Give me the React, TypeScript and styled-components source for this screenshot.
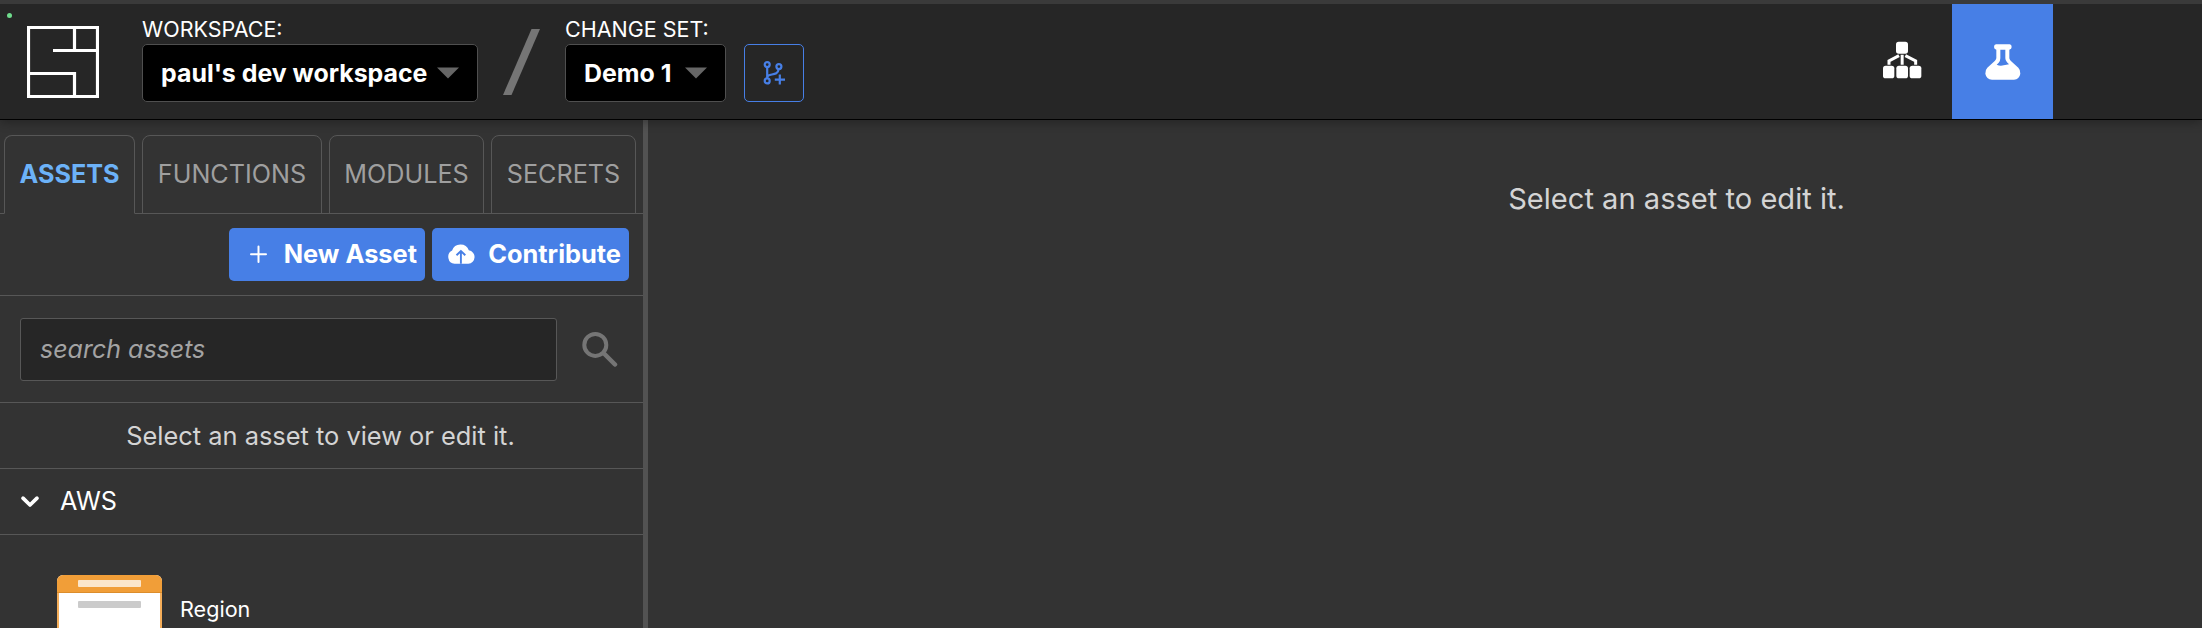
import React from "react";
import styled, { createGlobalStyle } from "styled-components";

const line = "#575757";
const blue = "#477fe6";

const GlobalStyle = createGlobalStyle`
  *, *::before, *::after { box-sizing: border-box; }
  body { margin: 0; overflow: hidden; background: #333; color: #fff; font-family: Inter, sans-serif; }
`;

const Page = styled.div`
  display: flex;
  flex-direction: column;
  height: 628px;
  width: 2202px;
  overflow: hidden;
`;

const Header = styled.header`
  display: flex;
  position: relative;
  flex: none;
  height: 120px;
  background: #262626;
  border-top: 4px solid #3a3a3a;
  border-bottom: 1px solid #000;
  box-shadow: 0 2px 10px rgba(0, 0, 0, 0.32);
`;

const StatusDot = styled.i`
  position: absolute;
  left: 7px;
  top: 9px;
  width: 5px;
  height: 5px;
  border-radius: 50%;
  background: #6fdc8c;
`;

const Logo = styled.svg`
  flex: none;
  width: 72px;
  height: 72px;
  margin: 22px 43px 0 27px;
`;

const Field = styled.div`
  display: flex;
  flex-direction: column;
  align-items: flex-start;
  padding-top: 12px;
`;

const Label = styled.div`
  height: 28px;
  font-size: 21.5px;
  line-height: 26px;
  white-space: nowrap;
`;

const Select = styled.button<{ $width: number }>`
  display: flex;
  align-items: center;
  justify-content: space-between;
  width: ${(p) => p.$width}px;
  height: 58px;
  padding: 0 18px 1px;
  border: 1px solid #4f4f4f;
  border-radius: 5px;
  background: #000;
  color: #fff;
  font: 700 24.9px/30px Inter, sans-serif;
  white-space: nowrap;
`;

const Caret = styled.svg`
  width: 22px;
  height: 12px;
  fill: #666;
`;

const Slash = styled.svg`
  width: 37px;
  height: 66px;
  margin: 25px 25px 0 25px;
  fill: #757575;
`;

const BranchButton = styled.button`
  display: flex;
  align-items: center;
  justify-content: center;
  width: 60px;
  height: 58px;
  margin: 40px 0 0 18px;
  padding: 0;
  border: 1px solid ${blue};
  border-radius: 5px;
  background: transparent;
`;

const Nav = styled.nav`
  display: flex;
  margin-left: auto;
  margin-right: 149px;
`;

const NavItem = styled.a<{ $active?: boolean }>`
  display: flex;
  align-items: center;
  justify-content: center;
  width: 101px;
  padding-bottom: ${(p) => (p.$active ? 0 : 3)}px;
  background: ${(p) => (p.$active ? blue : "transparent")};
`;

const Body = styled.div`
  display: flex;
  flex: 1;
  min-height: 0;
`;

const Sidebar = styled.aside`
  flex: none;
  width: 648px;
  border-right: 5px solid #525252;
`;

const Tabs = styled.div`
  display: flex;
  gap: 7px;
  height: 94px;
  padding: 15px 0 0 4px;
  box-shadow: inset 0 -1px ${line};
`;

const Tab = styled.div<{ $width: number; $active?: boolean }>`
  width: ${(p) => p.$width}px;
  border: 1px solid ${line};
  border-bottom-color: ${(p) => (p.$active ? "#333" : line)};
  border-radius: 8px 8px 0 0;
  color: ${(p) => (p.$active ? "#6cb2f8" : "#9f9f9f")};
  font-size: 25.2px;
  font-weight: ${(p) => (p.$active ? 700 : 400)};
  line-height: 76px;
  text-align: center;
  white-space: nowrap;
`;

const Actions = styled.div`
  display: flex;
  justify-content: flex-end;
  gap: 7px;
  height: 82px;
  padding: 14px 14px 0 0;
  border-bottom: 1px solid ${line};
`;

const ActionButton = styled.button<{ $width: number }>`
  display: flex;
  align-items: center;
  justify-content: space-between;
  width: ${(p) => p.$width}px;
  height: 53px;
  padding: 0 8px 1px 15px;
  border: 0;
  border-radius: 5px;
  background: ${blue};
  color: #fff;
  font: 700 25.4px/30px Inter, sans-serif;
  white-space: nowrap;
`;

const SearchRow = styled.div`
  display: flex;
  height: 107px;
  padding: 22px 0 0 20px;
  border-bottom: 1px solid ${line};
`;

const SearchBox = styled.input`
  width: 537px;
  height: 63px;
  padding: 0 19px 1px;
  border: 1px solid ${line};
  border-radius: 3px;
  outline: 0;
  background: #262626;
  font: italic 400 25px Inter, sans-serif;
  &::placeholder { color: #a3a3a3; opacity: 1; }
`;

const SearchIcon = styled.svg`
  width: 36px;
  height: 36px;
  margin: 13px 0 0 25px;
`;

const Hint = styled.div`
  height: 66px;
  border-bottom: 1px solid ${line};
  color: #d4d4d4;
  font-size: 25.4px;
  line-height: 65px;
  text-align: center;
  padding-right: 2px;
`;

const Group = styled.div`
  display: flex;
  align-items: center;
  gap: 20px;
  height: 66px;
  padding: 0 0 1px 20px;
  border-bottom: 1px solid ${line};
  font-size: 25.2px;
`;

const AssetRow = styled.div`
  display: flex;
  gap: 18px;
  padding: 40px 0 0 57px;
`;

const AssetCard = styled.div`
  display: flex;
  flex-direction: column;
  width: 105px;
  height: 100px;
  border-radius: 6px;
  overflow: hidden;
  background: #fff;
`;

const CardHead = styled.div`
  display: flex;
  align-items: center;
  justify-content: center;
  height: 18px;
  background: #f19e38;
  border-bottom: 1px solid #dc8d2c;
`;

const Bar = styled.div<{ $color: string }>`
  width: 63px;
  height: 7px;
  border-radius: 1px;
  background: ${(p) => p.$color};
`;

const CardBody = styled.div`
  display: flex;
  flex: 1;
  align-items: flex-start;
  justify-content: center;
  padding-top: 8px;
  border: solid #f5ae5a;
  border-width: 0 2px 2px;
`;

const AssetName = styled.div`
  padding-top: 20px;
  font-size: 21.6px;
  line-height: 28px;
`;

const Main = styled.main`
  flex: 1;
  padding: 59px 0 0 503px;
  color: #d4d4d4;
  font-size: 29.1px;
  line-height: 40px;
  text-align: center;
`;

const LogoIcon = () => (
  <Logo viewBox="0 0 72 72" fill="none" stroke="#fff" strokeWidth="3.2">
    <path d="M1.5 1.5H70.5V70.5H1.5ZM47.5 1.5V24.5M26 24.5H70.5M1.5 47.5H47.5V70.5" />
  </Logo>
);

const CaretIcon = () => (
  <Caret viewBox="0 0 22 12"><path d="M0 .5H22L11 11.5Z" /></Caret>
);

const BranchIcon = () => (
  <svg width="24" height="26" viewBox="0 0 24 26" fill="none" stroke={blue} strokeWidth="2.2">
    <circle cx="5.2" cy="4.6" r="2.5" />
    <circle cx="5.2" cy="20.9" r="2.5" />
    <circle cx="16.9" cy="6.6" r="2.5" />
    <path d="M5.2 7V18.6M5.2 17C6 12.5 16.2 17 16.6 9M17.8 14.6V24.6M12.8 19.6H23" />
  </svg>
);

const HierarchyIcon = () => (
  <svg width="40" height="38" viewBox="126 124 120 114" fill="#fff">
    <rect x="168" y="126" width="36" height="36" rx="8" />
    <rect x="129" y="198" width="34" height="38" rx="8" />
    <rect x="169" y="198" width="35" height="38" rx="8" />
    <rect x="209" y="198" width="35" height="38" rx="8" />
    <path d="M186.500 165V195M177 168L147 184V195M196 168L227 184V195" fill="none" stroke="#fff" strokeWidth="9" />
  </svg>
);

const FlaskIcon = () => (
  <svg width="36" height="36" viewBox="434 130 108 108">
    <path
      fillRule="evenodd"
      fill="#fff"
      d="M467 131H508Q514 132 514 139Q514 146 507 147V173Q508 177 511 180L534 201Q541 208 540 219Q537 236 521 237H455Q438 236 435 219Q434 208 441 201L464 180Q468 176 468 172V147Q461 146 461 139Q461 132 467 131ZM480 147V173Q480 181 475 186L469 192Q479 197 490 194Q499 192 506 191L500 185Q495 180 495 173V147Z"
    />
  </svg>
);

const PlusIcon = () => (
  <svg width="28" height="28" viewBox="0 0 28 28" stroke="#fff" strokeWidth="2" strokeLinecap="round">
    <path d="M14.500 6.500V22M7 14.300H22" />
  </svg>
);

const CloudIcon = () => (
  <svg width="31" height="28" viewBox="2.400 0 31 28">
    <path fill="#fff" d="M10 23.800A7 7 0 0 1 7.500 10.600A8.800 8.800 0 0 1 24.200 10.300A6.800 6.800 0 0 1 23.700 23.800Z" />
    <path fill="none" stroke={blue} strokeWidth="1.900" d="M16.300 23.800V11.500M11.900 15.300L16.300 11L20.700 15.300" />
  </svg>
);

const ChevronIcon = () => (
  <svg width="20" height="14" viewBox="0 0 20 14" fill="none" stroke="#fff" strokeWidth="3.700" strokeLinecap="round" strokeLinejoin="round">
    <path d="M3 4.200L10 11L17 4.200" />
  </svg>
);

export default function App() {
  return (
    <Page>
      <GlobalStyle />
      <Header>
        <StatusDot />
        <LogoIcon />
        <Field>
          <Label>WORKSPACE:</Label>
          <Select $width={336}>paul's dev workspace<CaretIcon /></Select>
        </Field>
        <Slash viewBox="0 0 37 66"><path d="M28.500 0H37L8.500 66H0Z" /></Slash>
        <Field>
          <Label>CHANGE SET:</Label>
          <Select $width={161}>Demo 1<CaretIcon /></Select>
        </Field>
        <BranchButton><BranchIcon /></BranchButton>
        <Nav>
          <NavItem><HierarchyIcon /></NavItem>
          <NavItem $active><FlaskIcon /></NavItem>
        </Nav>
      </Header>
      <Body>
        <Sidebar>
          <Tabs>
            <Tab $width={131} $active>ASSETS</Tab>
            <Tab $width={180}>FUNCTIONS</Tab>
            <Tab $width={155}>MODULES</Tab>
            <Tab $width={145}>SECRETS</Tab>
          </Tabs>
          <Actions>
            <ActionButton $width={196}><PlusIcon />New Asset</ActionButton>
            <ActionButton $width={197}><CloudIcon />Contribute</ActionButton>
          </Actions>
          <SearchRow>
            <SearchBox placeholder="search assets" />
            <SearchIcon viewBox="0 0 36 36" fill="none" stroke="#757575" strokeLinecap="round">
              <circle cx="13.300" cy="13.900" r="11" strokeWidth="4" />
              <path d="M22 22.500L33 33.500" strokeWidth="4.500" />
            </SearchIcon>
          </SearchRow>
          <Hint>Select an asset to view or edit it.</Hint>
          <Group><ChevronIcon />AWS</Group>
          <AssetRow>
            <AssetCard>
              <CardHead><Bar $color="#fbe6cb" /></CardHead>
              <CardBody><Bar $color="#cbcbcb" /></CardBody>
            </AssetCard>
            <AssetName>Region</AssetName>
          </AssetRow>
        </Sidebar>
        <Main>Select an asset to edit it.</Main>
      </Body>
    </Page>
  );
}
